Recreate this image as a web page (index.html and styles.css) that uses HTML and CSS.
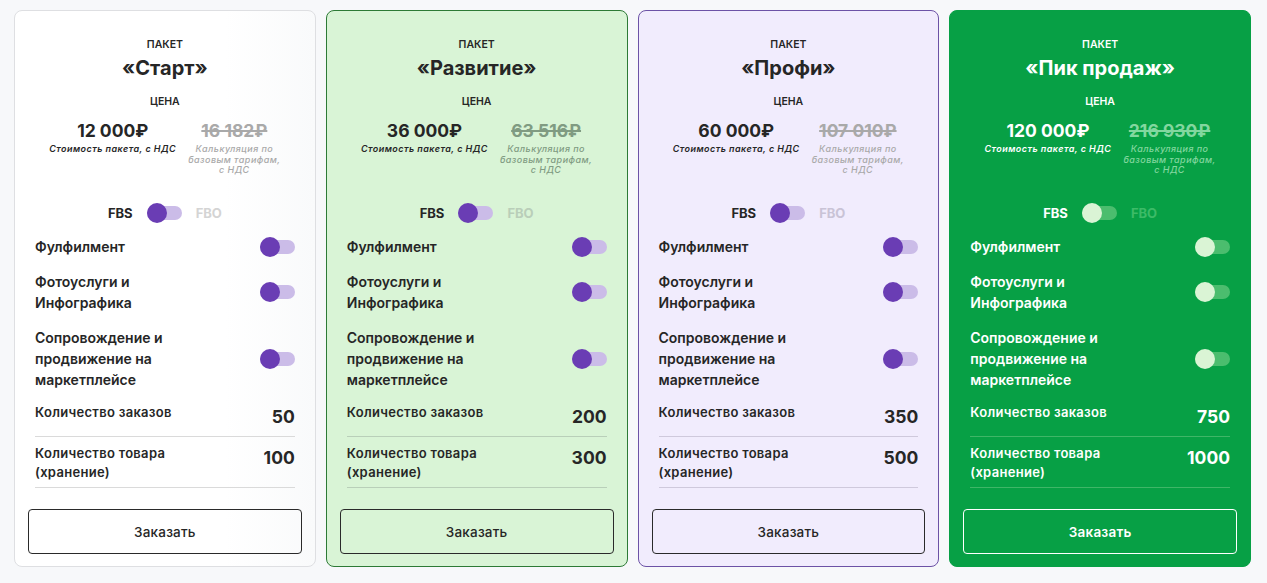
FILE: index.html
```html
<!DOCTYPE html>
<html lang="ru">
<head>
<meta charset="utf-8">
<title>Пакеты</title>
<link rel="stylesheet" href="styles.css">
</head>
<body>
<div class="plans">
  <div class="card card-start">
    <div class="small">ПАКЕТ</div>
    <div class="title">«Старт»</div>
    <div class="small price-label">ЦЕНА</div>
    <div class="prices">
      <div class="pcol"><div class="price">12 000₽</div><div class="note">Стоимость пакета, с НДС</div></div>
      <div class="pcol old"><div class="price">16 182₽</div><div class="note">Калькуляция по<br>базовым тарифам,<br>с НДС</div></div>
    </div>
    <div class="mode"><span class="on">FBS</span><span class="toggle"></span><span class="off">FBO</span></div>
    <div class="features">
      <div class="feat"><span>Фулфилмент</span><span class="toggle"></span></div>
      <div class="feat"><span>Фотоуслуги и<br>Инфографика</span><span class="toggle"></span></div>
      <div class="feat"><span>Сопровождение и<br>продвижение на<br>маркетплейсе</span><span class="toggle"></span></div>
    </div>
    <div class="stats">
      <div class="stat"><span class="sl">Количество заказов</span><span class="sv">50</span></div>
      <div class="stat"><span class="sl">Количество товара<br>(хранение)</span><span class="sv">100</span></div>
    </div>
    <button class="btn">Заказать</button>
  </div>

  <div class="card card-grow">
    <div class="small">ПАКЕТ</div>
    <div class="title">«Развитие»</div>
    <div class="small price-label">ЦЕНА</div>
    <div class="prices">
      <div class="pcol"><div class="price">36 000₽</div><div class="note">Стоимость пакета, с НДС</div></div>
      <div class="pcol old"><div class="price">63 516₽</div><div class="note">Калькуляция по<br>базовым тарифам,<br>с НДС</div></div>
    </div>
    <div class="mode"><span class="on">FBS</span><span class="toggle"></span><span class="off">FBO</span></div>
    <div class="features">
      <div class="feat"><span>Фулфилмент</span><span class="toggle"></span></div>
      <div class="feat"><span>Фотоуслуги и<br>Инфографика</span><span class="toggle"></span></div>
      <div class="feat"><span>Сопровождение и<br>продвижение на<br>маркетплейсе</span><span class="toggle"></span></div>
    </div>
    <div class="stats">
      <div class="stat"><span class="sl">Количество заказов</span><span class="sv">200</span></div>
      <div class="stat"><span class="sl">Количество товара<br>(хранение)</span><span class="sv">300</span></div>
    </div>
    <button class="btn">Заказать</button>
  </div>

  <div class="card card-pro">
    <div class="small">ПАКЕТ</div>
    <div class="title">«Профи»</div>
    <div class="small price-label">ЦЕНА</div>
    <div class="prices">
      <div class="pcol"><div class="price">60 000₽</div><div class="note">Стоимость пакета, с НДС</div></div>
      <div class="pcol old"><div class="price">107 010₽</div><div class="note">Калькуляция по<br>базовым тарифам,<br>с НДС</div></div>
    </div>
    <div class="mode"><span class="on">FBS</span><span class="toggle"></span><span class="off">FBO</span></div>
    <div class="features">
      <div class="feat"><span>Фулфилмент</span><span class="toggle"></span></div>
      <div class="feat"><span>Фотоуслуги и<br>Инфографика</span><span class="toggle"></span></div>
      <div class="feat"><span>Сопровождение и<br>продвижение на<br>маркетплейсе</span><span class="toggle"></span></div>
    </div>
    <div class="stats">
      <div class="stat"><span class="sl">Количество заказов</span><span class="sv">350</span></div>
      <div class="stat"><span class="sl">Количество товара<br>(хранение)</span><span class="sv">500</span></div>
    </div>
    <button class="btn">Заказать</button>
  </div>

  <div class="card card-peak">
    <div class="small">ПАКЕТ</div>
    <div class="title">«Пик продаж»</div>
    <div class="small price-label">ЦЕНА</div>
    <div class="prices">
      <div class="pcol"><div class="price">120 000₽</div><div class="note">Стоимость пакета, с НДС</div></div>
      <div class="pcol old"><div class="price">216 930₽</div><div class="note">Калькуляция по<br>базовым тарифам,<br>с НДС</div></div>
    </div>
    <div class="mode"><span class="on">FBS</span><span class="toggle"></span><span class="off">FBO</span></div>
    <div class="features">
      <div class="feat"><span>Фулфилмент</span><span class="toggle"></span></div>
      <div class="feat"><span>Фотоуслуги и<br>Инфографика</span><span class="toggle"></span></div>
      <div class="feat"><span>Сопровождение и<br>продвижение на<br>маркетплейсе</span><span class="toggle"></span></div>
    </div>
    <div class="stats">
      <div class="stat"><span class="sl">Количество заказов</span><span class="sv">750</span></div>
      <div class="stat"><span class="sl">Количество товара<br>(хранение)</span><span class="sv">1000</span></div>
    </div>
    <button class="btn">Заказать</button>
  </div>
</div>
</body>
</html>
```
FILE: styles.css
```css
* { box-sizing: border-box; }
html, body { margin: 0; }
body {
  background: #f7f8fa;
  font-family: "Inter", "Noto Sans", sans-serif;
  color: #262626;
}
.plans {
  display: grid;
  grid-template-columns: repeat(4, 1fr);
  gap: 10px;
  padding: 10px 16px 0 14px;
}
.card {
  height: 557px;
  border: 1px solid #dedfe2;
  border-radius: 8px;
  background: linear-gradient(90deg, #ffffff 70%, #f9fafb);
  padding: 27px 13px 12px;
  display: flex;
  flex-direction: column;
  --knob: #6a3db4;
  --track: #cbbce8;
  --old: #a9a9a9;
  --line: #dadada;
  --off: #d4d4d4;
}
.card-grow { background: #d9f4d6; border-color: #2d7a36; --old: #809b82; --off: #b9ceb9; --line: #b9cfb9; }
.card-pro { background: #f1ecfd; border-color: #6c52a6; --off: #c9c3d6; --line: #cfc9dc; }
.card-peak {
  background: #07a045;
  border-color: #07a045;
  color: #ffffff;
  --knob: #daf4d5;
  --track: #4bbd6e;
  --old: #82d79f;
  --line: #3fb667;
  --off: #3cbb67;
}
.small {
  text-align: center;
  font-size: 10.5px;
  font-weight: 600;
  line-height: 14px;
}
.title {
  text-align: center;
  font-size: 20px;
  font-weight: 700;
  line-height: 26px;
  margin-top: 3px;
}
.price-label { margin-top: 14px; }
.prices {
  display: flex;
  justify-content: center;
  gap: 12px;
  margin-top: 11px;
}
.pcol { text-align: center; }
.price {
  font-size: 17.5px;
  font-weight: 700;
  line-height: 22px;
  white-space: nowrap;
}
.old .price {
  color: var(--old);
  text-decoration: line-through;
  text-decoration-thickness: 1.5px;
}
.note {
  font-size: 9px;
  font-style: italic;
  font-weight: 600;
  letter-spacing: 0.45px;
  line-height: 10.5px;
  margin-top: 2px;
  white-space: nowrap;
}
.old .note { color: var(--old); font-weight: 500; }
.mode {
  display: flex;
  justify-content: center;
  align-items: center;
  gap: 14px;
  margin-top: 28px;
  font-size: 13px;
  font-weight: 700;
  height: 20px;
}
.mode .off { color: var(--off); }
.toggle {
  position: relative;
  flex: none;
  width: 35px;
  height: 14px;
  border-radius: 7px;
  background: var(--track);
}
.toggle::after {
  content: "";
  position: absolute;
  left: 0;
  top: -3px;
  width: 20px;
  height: 20px;
  border-radius: 50%;
  background: var(--knob);
}
.features {
  display: flex;
  flex-direction: column;
  gap: 14px;
  margin: 13px 7px 0;
}
.feat {
  display: flex;
  justify-content: space-between;
  align-items: center;
  font-size: 14px;
  font-weight: 600;
  line-height: 21px;
}
.stats { margin: 6px 7px 0; }
.stat {
  display: flex;
  justify-content: space-between;
  align-items: flex-start;
  padding: 7px 0 5px;
  border-bottom: 1px solid var(--line);
}
.sl {
  font-size: 13px;
  font-weight: 600;
  letter-spacing: 0.3px;
  line-height: 19px;
}
.sv {
  font-size: 17.5px;
  font-weight: 700;
  line-height: 28px;
}
.btn {
  margin-top: 21px;
  height: 46px;
  border: 1px solid #2a2a2a;
  border-radius: 4px;
  background: transparent;
  font-family: inherit;
  font-size: 13.5px;
  font-weight: 500;
  letter-spacing: 0.2px;
  color: inherit;
}
.card-peak .btn { border-color: #ffffff; font-weight: 600; }
```
